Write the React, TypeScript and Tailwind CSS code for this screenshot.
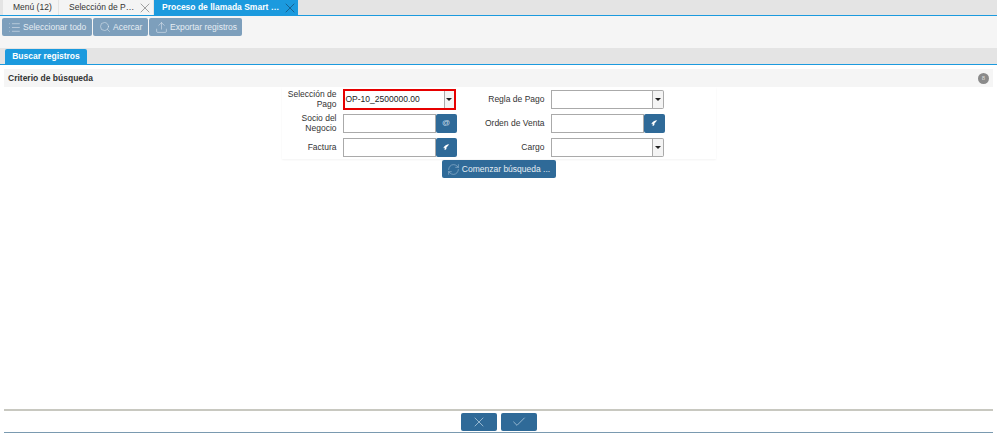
import { X, Check, List, Upload, RefreshCw, Search } from "lucide-react";

function Tab({ label, close, active, width }: { label: string; close?: boolean; active?: boolean; width: string }) {
  return (
    <div className={`flex h-[15px] items-center ${width} ${active ? "bg-[#1b9ade] text-white font-bold pl-2" : "bg-[#f4f4f4] text-[#333] pl-[10px]"} mr-px`}>
      <span className="flex-1 truncate">{label}</span>
      {close && <X className={`h-[16px] w-[16px] shrink-0 ${active ? "text-[#14456b]" : "text-[#777]"}`} strokeWidth={1} />}
    </div>
  );
}

function ToolButton({ icon, label, width }: { icon: React.ReactNode; label: string; width: string }) {
  return (
    <div className={`flex h-[18px] items-center gap-[2px] rounded-[2px] bg-[#7d9fbc] pl-[6px] text-[8.5px] text-[#e6edf3] ${width}`}>
      {icon}
      <span>{label}</span>
    </div>
  );
}

function Caret() {
  return (
    <div className="flex h-full w-[11px] items-center justify-center rounded-r-[2px] border-y border-r border-[#aaa] bg-[#f4f4f4]">
      <div className="h-0 w-0 border-x-[3px] border-t-[3px] border-x-transparent border-t-[#222]" />
    </div>
  );
}

function Combo({ value, width }: { value?: string; width: string }) {
  return (
    <div className={`flex h-[19px] ${width}`}>
      <div className="flex-1 border border-[#aaa] bg-white pl-[2px] leading-[17px] text-[#222]">{value}</div>
      <Caret />
    </div>
  );
}

function Lookup({ kind }: { kind: "at" | "wing" }) {
  return (
    <div className="flex h-[19px] w-[114px]">
      <div className="w-[93px] border border-[#aaa] bg-white" />
      <div className="flex w-[21px] items-center justify-center rounded-[2px] bg-[#2f6a98] text-[#c9dcea]">
        {kind === "at" ? (
          <span className="text-[8px] leading-none">@</span>
        ) : (
          <svg viewBox="0 0 10 10" className="h-[8px] w-[8px]">
            <path d="M9 1.5C6 1.5 3 3 1.5 6.5L3.5 6 3 8.5C5 8.5 6 7 5.5 5.5 6.5 4.5 8 3 9 1.5Z" fill="#fff" />
          </svg>
        )}
      </div>
    </div>
  );
}

function Label({ children }: { children: React.ReactNode }) {
  return <div className="text-right leading-[10px] text-[#333]">{children}</div>;
}

export default function App() {
  return (
    <div className="flex h-[434px] w-[997px] flex-col overflow-hidden bg-white font-['Liberation_Sans',sans-serif] text-[8.5px]">
      <div className="flex h-[16px] border-b border-[#1b9ade] bg-[#e4e4e4] pl-[3px]">
        <Tab label="Menú (12)" width="w-[55px]" />
        <Tab label="Selección de Pago" close width="w-[94px]" />
        <Tab label="Proceso de llamada Smart Br..." close active width="w-[144px]" />
      </div>

      <div className="flex h-[32px] items-start gap-px bg-[#f5f5f5] pl-[2px] pt-[2px]">
        <ToolButton icon={<List className="h-[13px] w-[13px]" strokeWidth={1} />} label="Seleccionar todo" width="w-[90px]" />
        <ToolButton icon={<Search className="h-[12px] w-[12px]" strokeWidth={1} />} label="Acercar" width="w-[55px]" />
        <ToolButton icon={<Upload className="h-[13px] w-[13px]" strokeWidth={1} />} label="Exportar registros" width="w-[93px]" />
      </div>

      <div className="flex h-[17px] items-end border-b border-[#1b9ade] bg-[#e4e4e4] pl-[5px]">
        <div className="flex h-[15px] w-[82px] items-center justify-center rounded-t-[2px] bg-[#1b9ade] font-bold text-white">Buscar registros</div>
      </div>

      <div className="mx-[4px] mt-[4px] flex h-[18px] items-center justify-between bg-[#f5f5f5] pl-[4px] pr-[4px]">
        <span className="font-bold text-[#333]">Criterio de búsqueda</span>
        <div className="flex h-[11px] w-[11px] items-center justify-center rounded-full bg-[#8a8a8a] text-[6px] text-[#ddd]">8</div>
      </div>

      <div className="flex flex-1 flex-col items-center">
        <div className="grid w-[434px] grid-cols-[55px_114px_82px_1fr] grid-rows-[24px_24px_24px] items-center gap-x-[6px] pl-0 text-[8.5px] shadow-[0_1px_2px_rgba(0,0,0,0.05)]">
          <Label>Selección de<br />Pago</Label>
          <div className="flex h-[21px] w-[113px] border-2 border-[#e60000]">
            <div className="flex-1 bg-white pl-[1px] leading-[17px] text-[#222]">OP-10_2500000.00</div>
            <div className="flex w-[10px] items-center justify-center border-l border-[#aaa] bg-[#f4f4f4]">
              <div className="h-0 w-0 border-x-[3px] border-t-[3px] border-x-transparent border-t-[#222]" />
            </div>
          </div>
          <Label>Regla de Pago</Label>
          <Combo width="w-[113px]" />
          <Label>Socio del<br />Negocio</Label>
          <Lookup kind="at" />
          <Label>Orden de Venta</Label>
          <Lookup kind="wing" />
          <Label>Factura</Label>
          <Lookup kind="wing" />
          <Label>Cargo</Label>
          <Combo width="w-[113px]" />
        </div>
        <div className="mt-[1px] flex h-[18px] w-[114px] items-center justify-center gap-[2px] rounded-[2px] bg-[#2f6a98] text-[8.5px] text-[#e6edf3]">
          <RefreshCw className="h-[13px] w-[13px] text-[#a9c4d9]" strokeWidth={1} />
          <span>Comenzar búsqueda ...</span>
        </div>
      </div>

      <div className="mx-[4px] flex h-[24px] items-center justify-center gap-[4px] border-y border-t-2 border-y-[#c8c8c0] border-b-[#7a9ab0]">
        <div className="flex h-[18px] w-[36px] items-center justify-center rounded-[2px] bg-[#2f6a98] text-[#c9dcea]">
          <X className="h-[16px] w-[16px]" strokeWidth={1} />
        </div>
        <div className="flex h-[18px] w-[36px] items-center justify-center rounded-[2px] bg-[#2f6a98] text-[#c9dcea]">
          <Check className="h-[16px] w-[16px]" strokeWidth={1} />
        </div>
      </div>
      <div className="h-[1px]" />
    </div>
  );
}
